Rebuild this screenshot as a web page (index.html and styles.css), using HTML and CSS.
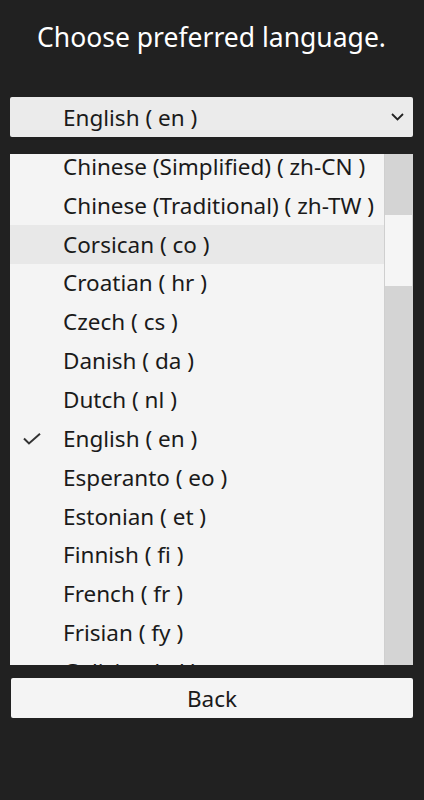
FILE: index.html
```html
<!DOCTYPE html>
<html lang="en">
<head>
<meta charset="utf-8">
<title>Choose preferred language</title>
<link rel="stylesheet" href="styles.css">
</head>
<body>
<main class="screen">
  <h1 class="title">Choose preferred language.</h1>
  <div class="select">
    <span class="select-value">English ( en )</span>
    <svg class="chevron" width="13" height="8" viewBox="0 0 13 8"><path d="M1 1 L6.5 6.5 L12 1" fill="none" stroke="#222" stroke-width="1.8"/></svg>
  </div>
  <div class="listbox">
    <ul class="options">
      <li class="option">Chinese (Simplified) ( zh-CN )</li>
      <li class="option">Chinese (Traditional) ( zh-TW )</li>
      <li class="option hover">Corsican ( co )</li>
      <li class="option">Croatian ( hr )</li>
      <li class="option">Czech ( cs )</li>
      <li class="option">Danish ( da )</li>
      <li class="option">Dutch ( nl )</li>
      <li class="option selected"><svg class="check" width="18" height="12" viewBox="0 0 18 12"><path d="M1 5.5 L6 10.5 L17 0.8" fill="none" stroke="#333" stroke-width="2"/></svg>English ( en )</li>
      <li class="option">Esperanto ( eo )</li>
      <li class="option">Estonian ( et )</li>
      <li class="option">Finnish ( fi )</li>
      <li class="option">French ( fr )</li>
      <li class="option">Frisian ( fy )</li>
      <li class="option">Galician ( gl )</li>
    </ul>
    <div class="scrollbar"><div class="thumb"></div></div>
  </div>
  <button class="back">Back</button>
</main>
</body>
</html>
```
FILE: styles.css
```css
* { box-sizing: border-box; }
html, body { margin: 0; padding: 0; }
body {
  background: #212121;
  font-family: "Noto Sans", "Open Sans", sans-serif;
  width: 424px;
  height: 800px;
  overflow: hidden;
}
.screen {
  display: flex;
  flex-direction: column;
  padding: 0 11px 0 10px;
}
.title {
  margin: 0;
  padding-top: 17px;
  height: 97px;
  color: #ffffff;
  font-size: 26.5px;
  font-weight: 400;
  text-align: center;
  line-height: 40px;
}
.select {
  height: 40px;
  background: #ebebeb;
  border-radius: 2px;
  display: flex;
  align-items: center;
  padding-left: 53px;
  padding-right: 9px;
  color: #1a1a1a;
  font-size: 22.5px;
}
.select-value { flex: 1; }
.chevron { display: block; }
.listbox {
  margin-top: 17px;
  height: 511px;
  background: #f4f4f4;
  display: flex;
  overflow: hidden;
}
.options {
  list-style: none;
  margin: -7px 0 0 0;
  padding: 0;
  flex: 1;
}
.option {
  position: relative;
  height: 38.85px;
  display: flex;
  align-items: center;
  padding-left: 53px;
  color: #1a1a1a;
  font-size: 22.5px;
  white-space: nowrap;
}
.option.hover { background: #e8e8e8; }
.check {
  position: absolute;
  left: 13px;
  top: 14px;
}
.scrollbar {
  width: 29px;
  background: #d4d4d4;
  padding-top: 61px;
  border-left: 1px solid #cfcfcf;
}
.thumb {
  height: 71px;
  background: #f5f5f5;
  margin-right: 1px;
}
.back {
  margin-top: 13px;
  margin-left: 1px;
  height: 40px;
  background: #f4f4f4;
  border: none;
  border-radius: 2px;
  color: #1a1a1a;
  font-family: "Noto Sans", "Open Sans", sans-serif;
  font-size: 22.5px;
  padding: 0;
}
```
